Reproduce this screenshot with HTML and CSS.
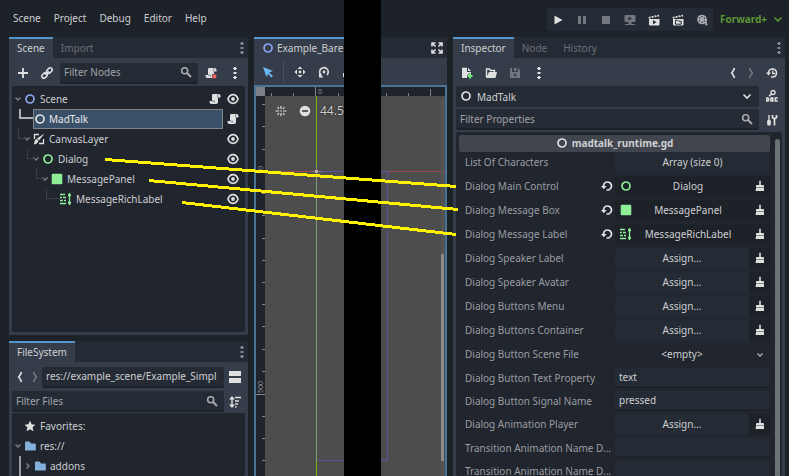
FILE: index.html
```html
<!DOCTYPE html>
<html lang="en">
<head>
<meta charset="utf-8">
<title>Scene editor</title>
<link rel="stylesheet" href="styles.css">
</head>
<body>
<svg class="defs" aria-hidden="true">
  <symbol id="ring" viewBox="0 0 12 12"><circle cx="6" cy="6" r="4" fill="none" stroke="currentColor" stroke-width="1.7"/></symbol>
  <symbol id="dots" viewBox="0 0 12 12"><path d="M5 0h2v1h1v1H7v1H5V2H4V1h1zM5 5h2v.5h1v1H7V7H5v-.5H4v-1h1zM5 9h2v1h1v1H7v1H5v-1H4v-1h1z" fill="currentColor"/></symbol>
  <symbol id="eye" viewBox="0 0 12 12"><path d="M1 6C2 3 4 1.700 6 1.700S10 3 11 6C10 9 8 10.300 6 10.300S2 9 1 6z" fill="none" stroke="currentColor" stroke-width="1.700"/><circle cx="6" cy="6" r="1.900" fill="currentColor"/></symbol>
  <symbol id="script" viewBox="0 0 12 12"><path d="M4 1h5.500A2 2 0 0 1 11.500 3v1.500H9V9a2 2 0 0 1-2 2H2.500a2 2 0 0 1-2-2V8H3V2.500A1.500 1.500 0 0 1 4 1z" fill="currentColor"/><path d="M8.700 1.500V4.500M3 8.200h2.500v1.300" fill="none" stroke="#363d4a" stroke-width=".6"/></symbol>
  <symbol id="search" viewBox="0 0 12 12"><circle cx="4.700" cy="4.700" r="3" fill="none" stroke="currentColor" stroke-width="1.600"/><path d="M7 7l4 4" stroke="currentColor" stroke-width="2"/></symbol>
  <symbol id="down" viewBox="0 0 12 12"><path d="M2.500 4.500L6 8l3.500-3.500" fill="none" stroke="currentColor" stroke-width="1.600"/></symbol>
  <symbol id="left" viewBox="0 0 12 12"><path d="M7.500 1Q6.500 4 4.700 6q1.800 2 2.800 5" fill="none" stroke="currentColor" stroke-width="1.700"/></symbol>
  <symbol id="right" viewBox="0 0 12 12"><path d="M4.500 1Q5.500 4 7.300 6q-1.800 2-2.800 5" fill="none" stroke="currentColor" stroke-width="1.700"/></symbol>
  <symbol id="twig" viewBox="0 0 12 12"><path d="M3.500 4.500L6 7l2.500-2.500" fill="none" stroke="currentColor" stroke-width="1.500"/></symbol>
  <symbol id="panel" viewBox="0 0 12 12"><rect x=".7" y=".7" width="10.600" height="10.600" rx="1.300" fill="#8eef97"/></symbol>
  <symbol id="rich" viewBox="0 0 12 12"><path d="M0 1.500h5M0 4.500h2M3 4.500h3M0 7.500h3M4 7.500h2M0 10.500h6M9.500 2v8M8 2.700h3M8 9.300h3M8.500 2L9.500.5l1 1.500M8.500 10l1 1.500 1-1.500" fill="none" stroke="#8eef97" stroke-width="1.300"/></symbol>
  <symbol id="brush" viewBox="0 0 12 12"><path d="M5.200.8h1.600V5H9q1 0 1 1v1H2V6q0-1 1-1h2.200z" fill="currentColor"/><path d="M2 7h8v1H2z" fill="currentColor" opacity=".55"/><path d="M2 8h8v3H1.500Q2 9.500 2 8z" fill="currentColor"/></symbol>
  <symbol id="revert" viewBox="0 0 12 12"><path d="M2.500 6.500A4 4 0 1 1 6.500 10H5.500" fill="none" stroke="currentColor" stroke-width="1.700"/><path d="M0 6h5.600L2.800 9.300z" fill="currentColor"/></symbol>
  <symbol id="folder" viewBox="0 0 12 12"><path d="M1 10.500V2.500q0-1 1-1h3.500l1.500 2h4q.8 0 .8.800v6.200z" fill="#84b1dc"/></symbol>
</svg>

<header class="menubar">
  <nav class="menus">
    <button>Scene</button><button>Project</button><button>Debug</button><button>Editor</button><button>Help</button>
  </nav>
  <div class="playbar">
    <button aria-label="Play"><svg class="i"><path d="M2.500 1.500L10.500 6l-8 4.500z" fill="currentColor"/></svg></button>
    <button aria-label="Pause" class="off"><svg class="i"><path d="M2 2h3v8H2zM7 2h3v8H7z" fill="currentColor"/></svg></button>
    <button aria-label="Stop" class="off"><svg class="i"><path d="M2 2h8v8H2z" fill="currentColor"/></svg></button>
    <button aria-label="Remote" class="off"><svg class="i"><path d="M1.500 1h9q1 0 1 1v5q0 1-1 1H7.500v2H11v1H1v-1h3.500V8h-3q-1 0-1-1V2q0-1 1-1z" fill="currentColor"/><path d="M4.500 2.500L8 4.500l-3.500 2z" fill="#252b34"/></svg></button>
    <button aria-label="Play scene"><svg class="i"><path d="M1 5h10.500v5.500q0 1-1 1H2q-1 0-1-1z" fill="currentColor"/><path d="M.7 3.800L11 1.500" stroke="currentColor" stroke-width="1.800" stroke-dasharray="2 1"/><path d="M5 6l3.500 2.200L5 10.300z" fill="#252b34"/></svg></button>
    <button aria-label="Play custom scene"><svg class="i"><path d="M1 5h10.500v5.500q0 1-1 1H2q-1 0-1-1z" fill="currentColor"/><path d="M.7 3.800L11 1.500" stroke="currentColor" stroke-width="1.800" stroke-dasharray="2 1"/><path d="M3.500 6.200h2l1 1h2.700v3H3.500z" fill="none" stroke="#252b34"/></svg></button>
    <button aria-label="Movie" class="dim"><svg class="i"><circle cx="6" cy="5.500" r="4.800" fill="currentColor"/><path d="M10 5v5.500h1.500" fill="none" stroke="currentColor" stroke-width="1.600"/><g fill="#252b34"><circle cx="6" cy="2.700" r=".7"/><circle cx="3.500" cy="4.200" r=".7"/><circle cx="8.500" cy="4.200" r=".7"/><circle cx="3.500" cy="7" r=".7"/><circle cx="6" cy="8.300" r=".7"/><circle cx="8.300" cy="7" r=".7"/></g></svg></button>
  </div>
  <label class="renderer"><select aria-label="Renderer"><option>Forward+</option></select><svg class="i"><use href="#down"/></svg></label>
</header>

<main class="workspace">
  <div class="left">
    <section class="dock">
      <div class="tabs"><button class="tab active">Scene</button><button class="tab">Import</button><button class="more" aria-label="Dock options"><svg class="i"><use href="#dots"/></svg></button></div>
      <div class="bar">
        <button class="tool" aria-label="Add node"><svg class="i"><path d="M6 1v10M1 6h10" stroke="currentColor" stroke-width="1.800"/></svg></button>
        <button class="tool" aria-label="Instance scene"><svg class="i"><g transform="rotate(-45 6 6)" fill="none" stroke="currentColor" stroke-width="1.500"><rect x="-.5" y="4" width="6" height="4" rx="2"/><rect x="6.500" y="4" width="6" height="4" rx="2"/><path d="M3.500 6h5"/></g></svg></button>
        <label class="field grow"><input aria-label="Filter Nodes" placeholder="Filter Nodes"><svg class="i dim"><use href="#search"/></svg></label>
        <button class="tool" aria-label="Detach script"><svg class="i"><use href="#script"/><rect x="7" y="7" width="5" height="5" fill="#363d4a"/><path d="M7.500 7.500h3.800v3.800H7.500z" fill="#f2685f"/></svg></button>
        <button class="tool" aria-label="More"><svg class="i"><use href="#dots"/></svg></button>
      </div>
      <ul class="tree">
        <li><svg class="i twig"><use href="#twig"/></svg><svg class="i blue"><use href="#ring"/></svg><span>Scene</span><svg class="i end"><use href="#script"/></svg><svg class="i"><use href="#eye"/></svg></li>
        <li class="d1 selected"><span class="branch strong"></span><div class="pick"><svg class="i"><use href="#ring"/></svg><span>MadTalk</span></div><svg class="i"><use href="#script"/></svg></li>
        <li class="d1"><span class="branch"></span><svg class="i twig"><use href="#twig"/></svg><svg class="i"><path d="M1.500 6V1.500H6M10.500 6v4.500H6" fill="none" stroke="currentColor" stroke-width="1.300"/><path d="M11.500.5L6 7.500 4 5.500zM3.500 6L5.500 8Q4.500 11 .7 11.500 1.500 10 1.500 8.500 2 6 3.500 6z" fill="currentColor"/></svg><span>CanvasLayer</span><svg class="i end"><use href="#eye"/></svg></li>
        <li class="d2"><span class="branch"></span><svg class="i twig"><use href="#twig"/></svg><svg class="i green"><use href="#ring"/></svg><span>Dialog</span><svg class="i end"><use href="#eye"/></svg></li>
        <li class="d3"><span class="branch"></span><svg class="i twig"><use href="#twig"/></svg><svg class="i"><use href="#panel"/></svg><span>MessagePanel</span><svg class="i end"><use href="#eye"/></svg></li>
        <li class="d4 leaf"><span class="branch"></span><svg class="i"><use href="#rich"/></svg><span>MessageRichLabel</span><svg class="i end"><use href="#eye"/></svg></li>
      </ul>
    </section>

    <section class="dock files">
      <div class="tabs"><button class="tab active">FileSystem</button><button class="more" aria-label="Dock options"><svg class="i"><use href="#dots"/></svg></button></div>
      <div class="bar path">
        <button class="nav" aria-label="Back"><svg class="i"><use href="#left"/></svg></button>
        <button class="nav off" aria-label="Forward"><svg class="i"><use href="#right"/></svg></button>
        <label class="field grow"><input aria-label="Path" value="res://example_scene/Example_Simpl"></label>
        <button class="tool" aria-label="Split mode"><svg class="i"><path d="M0 0h12v5H0zM0 7h12v5H0z" fill="currentColor"/></svg></button>
      </div>
      <div class="bar">
        <label class="field grow"><input aria-label="Filter Files" placeholder="Filter Files"><svg class="i dim"><use href="#search"/></svg></label>
        <button class="tool" aria-label="Sort files"><svg class="i"><path d="M3 2v8M1 3.500L3 1l2 2.500M1 8.500L3 11l2-2.500" fill="none" stroke="currentColor" stroke-width="1.400"/><path d="M6 1.500h6M6 5h4M6 8h3M6 11h1.500" stroke="currentColor" stroke-width="1.500"/></svg></button>
      </div>
      <ul class="tree">
        <li><span class="gap"></span><svg class="i"><path d="M6 .8l1.600 3.500 3.800.4-2.800 2.600.8 3.900L6 9.200l-3.400 2 .8-3.900L.6 4.700l3.800-.4z" fill="currentColor"/></svg><span>Favorites:</span></li>
        <li><svg class="i twig"><use href="#twig"/></svg><svg class="i"><use href="#folder"/></svg><span>res://</span></li>
        <li class="d1 rail"><svg class="i twig"><path d="M4.500 3.500L7 6 4.500 8.500" fill="none" stroke="currentColor" stroke-width="1.400"/></svg><svg class="i"><use href="#folder"/></svg><span>addons</span></li>
      </ul>
    </section>
  </div>

  <section class="editor">
    <div class="tabs">
      <button class="tab active scene-tab"><svg class="i blue"><use href="#ring"/></svg>Example_Bare</button>
      <button class="more" aria-label="Distraction free"><svg class="i"><path d="M1 4.500V1h3.500M7.500 1H11v3.500M11 7.500V11H7.500M4.500 11H1V7.500M1 1l3.500 3.500M11 1L7.500 4.500M11 11L7.500 7.500M1 11l3.500-3.500" fill="none" stroke="currentColor" stroke-width="1.600"/></svg></button>
    </div>
    <div class="canvas-tools">
      <button class="tool" aria-label="Select"><svg class="i"><path d="M1 1l10 4-4 1.500 4 3.500-1.500 1.500L6 8l-1.500 3z" fill="#69b7f5"/></svg></button>
      <span class="rule"></span>
      <button class="tool" aria-label="Move"><svg class="i"><path d="M6 .5L8.500 3h-5zM6 11.500L3.500 9h5zM.5 6L3 3.500v5zM11.500 6L9 8.500v-5z" fill="currentColor"/><circle cx="6" cy="6" r="1.400" fill="currentColor"/></svg></button>
      <button class="tool" aria-label="Rotate"><svg class="i"><path d="M3.500 9.500A4.300 4.300 0 1 1 9 9" fill="none" stroke="currentColor" stroke-width="1.600"/><path d="M1 7v4.500h4.500z" fill="currentColor"/><circle cx="6" cy="6" r="1.400" fill="currentColor"/></svg></button>
      <button class="tool" aria-label="Scale"><svg class="i"><path d="M1 7h4v4H1zM7 1h4v4" fill="currentColor"/></svg></button>
    </div>
    <div class="viewport">
      <svg class="scene" shape-rendering="crispEdges">
        <rect width="100%" height="100%" fill="#4d4d4d"/>
        <rect width="100%" height="11" fill="#1f232b"/><rect width="11" height="100%" fill="#1f232b"/>
        <path d="M17.500 8v3M39.500 8v3M61.500 0v11M84.500 8v3M132.500 8v3M154.500 8v3M176.500 4v7M8 19.500h3M8 41.500h3M8 64.500h3M8 108.500h3M8 130.500h3M8 153.500h3M8 175.500h3M8 197.500h3M8 219.500h3M8 241.500h3M8 264.500h3M8 286.500h3M0 309.500h11M8 331.500h3M8 353.500h3M8 375.500h3M0 86.500h11" stroke="#82858a"/>
        <rect width="11" height="11" fill="#7b8086"/>
        <text x="64" y="9">0</text>
        <text transform="translate(9 85) rotate(-90)">0</text>
        <text transform="translate(9 308) rotate(-90)">500</text>
        <path d="M11 86.500h182" stroke="#9e4a55"/>
        <path d="M62.500 11v400" stroke="#7bb414"/>
        <path d="M62.500 86.500h71v289h-71" fill="none" stroke="#59549a"/>
        <path d="M62.500 87v288" stroke="#7b9b79"/>
        <path d="M58 86.500h9M62.500 82v9" stroke="#8d8078"/><path d="M61 85h3v3h-3z" fill="#b8b0a8"/>
        <rect x="187" y="14" width="3" height="400" fill="#555"/><rect x="187" y="169" width="3" height="207" rx="1" fill="#8a8a8a"/>
      </svg>
      <div class="zoom">
        <button aria-label="Center view"><svg class="i"><path d="M6 1v3M6 11V8M.5 6H4M11.500 6H8M2.500 2l1.500 2M9.500 2L8 4M2.500 10L4 8M9.500 10L8 8" stroke="currentColor" stroke-width="1.200"/><circle cx="6" cy="6" r=".8" fill="currentColor"/></svg></button>
        <button aria-label="Zoom out"><svg class="i"><circle cx="6" cy="6" r="5.300" fill="currentColor"/><path d="M3 6h6" stroke="#444" stroke-width="1.700"/></svg></button>
        <span>44.5 %</span>
      </div>
    </div>
  </section>

  <section class="dock inspector">
    <div class="tabs"><button class="tab active">Inspector</button><button class="tab">Node</button><button class="tab">History</button><button class="more" aria-label="Dock options"><svg class="i"><use href="#dots"/></svg></button></div>
    <div class="bar tools">
      <button class="tool" aria-label="New resource"><svg class="i"><path d="M1 .8h5V5h4v1.500H7.500V8H6v3H1zM7 .8L10 4H7z" fill="currentColor"/><path d="M9 6.500v5M6.500 9h5" stroke="#6fe87c" stroke-width="2"/></svg></button>
      <button class="tool" aria-label="Open resource"><svg class="i"><path d="M1.500 10V2h3l1 1.500h4V5" fill="none" stroke="currentColor" stroke-width="1.400"/><path d="M4 5h8l-1.500 6H1z" fill="currentColor"/></svg></button>
      <button class="tool off" aria-label="Save resource"><svg class="i"><path d="M1 1h2v4h6V1l2 2v8H1z" fill="currentColor"/><path d="M5 1h2.500v3H5z" fill="currentColor"/><circle cx="6" cy="8" r="1.400" fill="#363d4a"/></svg></button>
      <button class="tool" aria-label="More"><svg class="i"><use href="#dots"/></svg></button>
      <button class="nav push" aria-label="Previous"><svg class="i"><use href="#left"/></svg></button>
      <button class="nav off" aria-label="Next"><svg class="i"><use href="#right"/></svg></button>
      <button class="tool" aria-label="History"><svg class="i"><path d="M2.500 6A4 4 0 1 1 6.500 10H5" fill="none" stroke="currentColor" stroke-width="1.600"/><path d="M0 5.500h5L2.500 8.500z" fill="currentColor"/><path d="M6.700 3.500v3h2.300" fill="none" stroke="currentColor" stroke-width="1.300"/></svg></button>
    </div>
    <div class="bar object">
      <label class="field flat grow"><svg class="i"><use href="#ring"/></svg><select aria-label="Object"><option>MadTalk</option></select><svg class="i"><use href="#down"/></svg></label>
      <button class="tool" aria-label="Documentation"><svg class="i"><circle cx="7" cy="2.500" r="2" fill="none" stroke="currentColor" stroke-width="1.400"/><path d="M5.500 4L3 6.300" stroke="currentColor" stroke-width="1.500"/><path d="M.8 8v3h.7q1.300 0 1.300-1.500T1.500 8zM5 8h1.800v3H5zM11.800 8H9.300v3h2.500" fill="none" stroke="currentColor" stroke-width="1.500"/></svg></button>
    </div>
    <div class="bar">
      <label class="field grow"><input aria-label="Filter Properties" placeholder="Filter Properties"><svg class="i dim"><use href="#search"/></svg></label>
      <button class="tool" aria-label="Manage properties"><svg class="i"><path d="M3 1v6" stroke="currentColor" stroke-width="1.400"/><rect x="1.200" y="6" width="3.600" height="5.500" rx="1.200" fill="currentColor"/><path d="M6.500 1v2.500L8.500 5 10.500 3.500V1M8.500 5v6.500" fill="none" stroke="currentColor" stroke-width="1.700"/></svg></button>
    </div>
    <div class="props">
      <div class="list">
        <h2><svg class="i"><use href="#ring"/></svg>madtalk_runtime.gd</h2>
        <div class="row"><span class="name">List Of Characters</span><div class="value"><button class="assign">Array (size 0)</button></div></div>
        <div class="row"><span class="name">Dialog Main Control</span><button class="undo" aria-label="Revert"><svg class="i"><use href="#revert"/></svg></button><div class="value set"><button class="ref"><svg class="i green"><use href="#ring"/></svg><span>Dialog</span></button><button class="clear" aria-label="Clear"><svg class="i"><use href="#brush"/></svg></button></div></div>
        <div class="row"><span class="name">Dialog Message Box</span><button class="undo" aria-label="Revert"><svg class="i"><use href="#revert"/></svg></button><div class="value set"><button class="ref"><svg class="i"><use href="#panel"/></svg><span>MessagePanel</span></button><button class="clear" aria-label="Clear"><svg class="i"><use href="#brush"/></svg></button></div></div>
        <div class="row"><span class="name">Dialog Message Label</span><button class="undo" aria-label="Revert"><svg class="i"><use href="#revert"/></svg></button><div class="value set"><button class="ref"><svg class="i"><use href="#rich"/></svg><span>MessageRichLabel</span></button><button class="clear" aria-label="Clear"><svg class="i"><use href="#brush"/></svg></button></div></div>
        <div class="row"><span class="name">Dialog Speaker Label</span><div class="value set"><button class="assign">Assign...</button><button class="clear" aria-label="Clear"><svg class="i"><use href="#brush"/></svg></button></div></div>
        <div class="row"><span class="name">Dialog Speaker Avatar</span><div class="value set"><button class="assign">Assign...</button><button class="clear" aria-label="Clear"><svg class="i"><use href="#brush"/></svg></button></div></div>
        <div class="row"><span class="name">Dialog Buttons Menu</span><div class="value set"><button class="assign">Assign...</button><button class="clear" aria-label="Clear"><svg class="i"><use href="#brush"/></svg></button></div></div>
        <div class="row"><span class="name">Dialog Buttons Container</span><div class="value set"><button class="assign">Assign...</button><button class="clear" aria-label="Clear"><svg class="i"><use href="#brush"/></svg></button></div></div>
        <div class="row"><label class="name" for="file">Dialog Button Scene File</label><div class="value"><select id="file"><option>&lt;empty&gt;</option></select><svg class="i arrow dim"><use href="#twig"/></svg></div></div>
        <div class="row text"><label class="name" for="prop">Dialog Button Text Property</label><input class="value" id="prop" value="text"></div>
        <div class="row text"><label class="name" for="signal">Dialog Button Signal Name</label><input class="value" id="signal" value="pressed"></div>
        <div class="row"><span class="name">Dialog Animation Player</span><div class="value set"><button class="assign">Assign...</button><button class="clear" aria-label="Clear"><svg class="i"><use href="#brush"/></svg></button></div></div>
        <div class="row text"><label class="name" for="fade1">Transition Animation Name D...</label><input class="value" id="fade1"></div>
        <div class="row text"><label class="name" for="fade2">Transition Animation Name D...</label><input class="value" id="fade2"></div>
      </div>
      <div class="scroll"></div>
    </div>
  </section>
</main>

<div class="band"></div>
<svg class="links" shape-rendering="crispEdges" aria-hidden="true"><path d="M105 159.500L456 186.500M149 180.500L458 209.500M182 202.500L456 234.500"/></svg>
</body>
</html>
```

FILE: styles.css
```css
* { box-sizing: border-box; }
html, body { height: 100%; margin: 0; }
body {
  display: flex; flex-direction: column; overflow: hidden; position: relative;
  background: #1d2229; color: #cdcfd2;
  font: 10px/20px "Noto Sans", sans-serif;
}
button, input, select {
  appearance: none; margin: 0; padding: 0; border: 0; border-radius: 0;
  background: none; color: inherit; font: inherit; outline: 0; min-width: 0;
}
button { display: flex; align-items: center; justify-content: center; white-space: nowrap; }
ul, h2 { margin: 0; padding: 0; list-style: none; }
.defs { position: absolute; width: 0; height: 0; }
.i { width: 12px; height: 12px; flex: none; color: #e0e0e0; overflow: visible; }
.blue { color: #8da5f3; }
.green { color: #8eef97; }
.off .i { color: #73777f; }
.dim, .dim .i { color: #a9abaf; }
.grow { flex: 1; }

.menubar { display: flex; align-items: center; flex: none; height: 37px; padding: 0 5px 0 13px; }
.menus { display: flex; gap: 13px; margin-right: auto; padding-bottom: 2px; }
.playbar { display: flex; gap: 12px; height: 23px; padding: 0 5px; margin-top: 2px; background: #252b34; border-radius: 3px; }
.renderer { display: flex; align-items: center; gap: 4px; margin-left: 7px; font-weight: 700; color: #5b9537; }
.renderer .i { color: #5b9537; }

.workspace { flex: 1; min-height: 0; display: grid; grid-template-columns: 239px minmax(0, 1fr) 332px; gap: 6px; padding: 0 4px 0 9px; }
.left { display: flex; flex-direction: column; gap: 6px; min-height: 0; }
.dock { display: flex; flex-direction: column; background: #363d4a; min-height: 0; overflow: hidden; }
.dock:first-child { flex: 0 0 298px; }
.files { flex: 1; }
.tabs { display: flex; flex: none; height: 21px; background: #252b34; }
.tab { padding: 0 8px 2px; border-top: 2px solid transparent; color: #6b6f77; }
.tab.active { border-color: #5796cb; background: #363d4a; color: #cdcfd2; }
.more { margin-left: auto; }
.dock .more .i { color: #85888e; }
.bar { display: flex; align-items: center; flex: none; gap: 2px; height: 23px; padding: 0 2px 0 3px; }
.bar:nth-child(2) { height: 28px; padding-top: 2px; }
.tool { width: 22px; height: 21px; flex: none; }
.nav { width: 15px; height: 21px; }
.push { margin-left: auto; }
.field { display: flex; align-items: center; height: 21px; padding: 0 6px 0 4px; background: #252b34; border-bottom: 2px solid #1d2229; border-radius: 2px; min-width: 0; }
.field.flat { border-bottom: 0; }
.field input, .field select { flex: 1; width: 0; height: 19px; }
.files .bar { gap: 0; }
.path .field { padding-right: 2px; }
::placeholder { color: #a0a3a8; opacity: 1; }

.tree { flex: 1; margin: 0 3px 3px; padding: 3px 6px 0 0; background: #21252e; border-radius: 2px; min-height: 0; }
.files .tree { margin-bottom: 0; }
.tree li { position: relative; display: flex; align-items: center; gap: 4px; height: 20px; }
.twig { color: #7b7e85; margin-right: -4px; }
.gap { width: 8px; }
.end { margin-left: auto; }
.end + .i { margin-left: 2px; }
.d1 { padding-left: 9px; }
.d2 { padding-left: 18px; }
.d3 { padding-left: 27px; }
.d4 { padding-left: 36px; }
.leaf { padding-left: 48px; }
.branch { position: absolute; top: 0; width: 8px; height: 10px; margin-left: -3px; border: solid #3b3f47; border-width: 0 0 1px 1px; }
.leaf .branch { width: 14px; margin-left: -14px; }
.branch.strong { width: 14px; border-color: #aeb0b3; border-width: 0 0 2px 2px; }
.selected { padding-left: 21px; }
.selected .branch { margin-left: -14px; }
.pick { display: flex; flex: 1; align-items: center; gap: 3px; height: 20px; background: #395068; border: 1px solid #80858c; color: #e8e9ea; }
.rail { margin-left: 7px; padding-left: 1px; border-left: 2px solid #9a9c9f; }

.editor { display: flex; flex-direction: column; min-width: 0; min-height: 0; overflow: hidden; }
.scene-tab { gap: 3px; width: 124px; justify-content: flex-start; }
.editor .more { margin-right: 4px; }
.canvas-tools { display: flex; align-items: center; flex: none; gap: 2px; height: 27px; padding-left: 3px; background: #363d4a; overflow: hidden; }
.rule { width: 1px; height: 21px; margin: 0 3px 0 2px; background: #4b515c; }
.viewport { position: relative; flex: 1; min-height: 0; border: solid #4b7396; border-width: 2px 2px 0; overflow: hidden; }
.scene { position: absolute; inset: -2px -2px 0; width: calc(100% + 4px); height: calc(100% + 2px); }
.scene text { font: 7px "Noto Sans", sans-serif; fill: #92959a; }
.zoom { position: absolute; top: 14px; left: 19px; display: flex; align-items: center; gap: 12px; height: 20px; }
.zoom span { margin-left: -3px; font-size: 12px; text-shadow: 0 0 2px #000; }

.inspector { flex: auto; }
.inspector .tools { height: 27px; padding-top: 3px; }
.inspector .nav { width: 16px; }
.object { height: 22px; }
.object select { margin-left: 5px; padding-bottom: 2px; }
.inspector .bar:nth-child(4) { height: 25px; }
.props { flex: 1; display: flex; gap: 5px; min-height: 0; margin: 0 3px; padding: 3px 2px 0 3px; background: #21252e; border-radius: 2px; overflow: hidden; }
.list { flex: 1; min-width: 0; }
h2 { display: flex; align-items: center; justify-content: center; gap: 4px; height: 17px; padding-bottom: 2px; background: #41454e; border-radius: 2px; font-size: 10px; font-weight: 700; }
.row { display: flex; align-items: center; height: 21px; margin-bottom: 3px; }
.row.text { height: 20px; }
.name { flex: 1; padding-left: 6px; color: #9a9da2; white-space: nowrap; overflow: hidden; }
.row:not(.text) .name, .row button, .value select { padding-bottom: 2px; }
.undo { width: 17px; height: 21px; }
.value { display: flex; position: relative; width: 155px; height: 100%; flex: none; border-radius: 2px; overflow: hidden; }
.assign { background: #252b34; }
.set { background: #1d2229; }
.ref, .assign { flex: 1; }
.ref { padding: 0 5px; }
.ref span { flex: 1; }
.clear { width: 21px; }
.value select { flex: 1; padding-right: 21px; text-align: center; text-align-last: center; }
.arrow { position: absolute; right: 4px; top: 5px; }
input.value { padding: 0 4px; background: #252b34; border-bottom: 2px solid #1d2229; }
.scroll { width: 5px; flex: none; margin: 4px 0 0; background: #6c7077; border-radius: 3px 3px 0 0; }

.band { position: absolute; top: 0; bottom: 0; left: 344px; width: 37px; background: #000; }
.links { position: absolute; inset: 0; width: 100%; height: 100%; pointer-events: none; }
.links path { fill: none; stroke: #fff200; stroke-width: 3; }
```
